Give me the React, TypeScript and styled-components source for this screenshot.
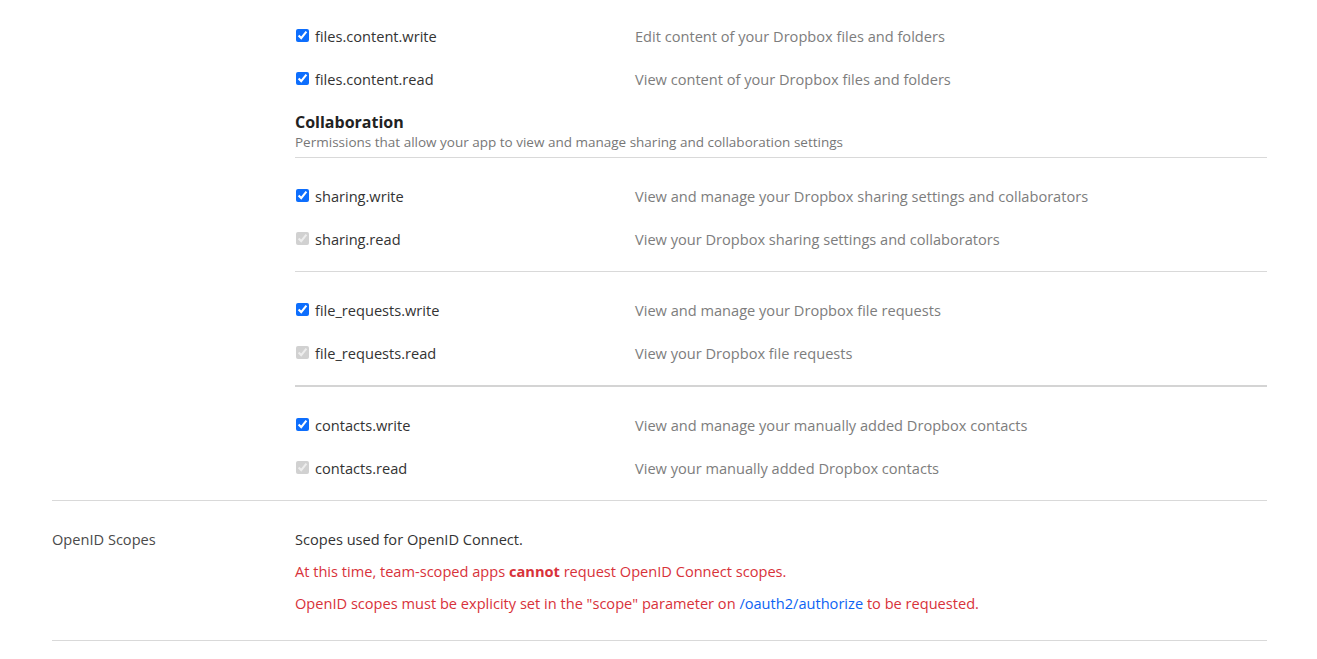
import React from "react";
import styled, { createGlobalStyle } from "styled-components";

const Global = createGlobalStyle`
  html, body { margin: 0; padding: 0; background: #fff; }
  body { font-family: "Open Sans", "Noto Sans", sans-serif; color: #333; }
`;

const Page = styled.div`
  padding: 14px 50px 0 52px;
`;

const Section = styled.section<{ $padded?: boolean; $border?: boolean }>`
  display: grid;
  grid-template-columns: 243px 1fr;
  padding: ${(p) => (p.$padded ? "27px 0 26px" : "0")};
  border-top: ${(p) => (p.$border ? "1px solid #d9d9d9" : "none")};
  border-bottom: ${(p) => (p.$border ? "1px solid #d9d9d9" : "none")};
`;

const SectionLabel = styled.div`
  font-size: 14.6px;
  line-height: 22px;
  color: #4a4a4a;
`;

const Content = styled.div`
  display: flex;
  flex-direction: column;
`;

const Group = styled.div<{ $thick?: boolean; $first?: boolean }>`
  padding: ${(p) => (p.$first ? "0 0 10px" : "16px 0 11px")};
  border-top: ${(p) =>
    p.$first ? "none" : p.$thick ? "2px solid #d4d4d4" : "1px solid #d9d9d9"};
`;

const Row = styled.div`
  display: grid;
  grid-template-columns: 340px 1fr;
  align-items: center;
  height: 43px;
`;

const ScopeLabel = styled.label`
  display: flex;
  align-items: center;
  font-size: 14.6px;
  color: #333;
`;

const Check = styled.input`
  width: 13px;
  height: 13px;
  margin: 0 6px 0 1px;
  accent-color: #0d6efd;
`;

const Desc = styled.div`
  font-size: 14.6px;
  color: #7d7d7d;
`;

const Category = styled.div`
  margin-top: 2px;
  padding-bottom: 5px;
`;

const CategoryTitle = styled.div`
  font-size: 16px;
  line-height: 20px;
  font-weight: 700;
  color: #222;
`;

const CategorySub = styled.div`
  font-size: 13.5px;
  line-height: 20px;
  color: #777;
`;

const Para = styled.p<{ $warn?: boolean }>`
  margin: 0 0 10px;
  font-size: 14.6px;
  line-height: 22px;
  color: ${(p) => (p.$warn ? "#d8323a" : "#333")};
  &:last-child { margin-bottom: 0; }
`;

const Link = styled.a`
  color: #0d63f3;
  text-decoration: none;
`;

type Scope = { name: string; desc: string; disabled?: boolean };

const ScopeRow = ({ s }: { s: Scope }) => (
  <Row>
    <ScopeLabel>
      <Check type="checkbox" defaultChecked disabled={s.disabled} />
      {s.name}
    </ScopeLabel>
    <Desc>{s.desc}</Desc>
  </Row>
);

const files: Scope[] = [
  { name: "files.content.write", desc: "Edit content of your Dropbox files and folders" },
  { name: "files.content.read", desc: "View content of your Dropbox files and folders" },
];

const groups: { thick?: boolean; scopes: Scope[] }[] = [
  {
    scopes: [
      { name: "sharing.write", desc: "View and manage your Dropbox sharing settings and collaborators" },
      { name: "sharing.read", desc: "View your Dropbox sharing settings and collaborators", disabled: true },
    ],
  },
  {
    scopes: [
      { name: "file_requests.write", desc: "View and manage your Dropbox file requests" },
      { name: "file_requests.read", desc: "View your Dropbox file requests", disabled: true },
    ],
  },
  {
    thick: true,
    scopes: [
      { name: "contacts.write", desc: "View and manage your manually added Dropbox contacts" },
      { name: "contacts.read", desc: "View your manually added Dropbox contacts", disabled: true },
    ],
  },
];

export default function App() {
  return (
    <>
      <Global />
      <Page>
        <Section>
          <div />
          <Content>
            <Group $first>
              {files.map((s) => (
                <ScopeRow key={s.name} s={s} />
              ))}
            </Group>
            <Category>
              <CategoryTitle>Collaboration</CategoryTitle>
              <CategorySub>
                Permissions that allow your app to view and manage sharing and collaboration settings
              </CategorySub>
            </Category>
            {groups.map((g, i) => (
              <Group key={i} $thick={g.thick}>
                {g.scopes.map((s) => (
                  <ScopeRow key={s.name} s={s} />
                ))}
              </Group>
            ))}
          </Content>
        </Section>
        <Section $padded $border>
          <SectionLabel>OpenID Scopes</SectionLabel>
          <Content>
            <Para>Scopes used for OpenID Connect.</Para>
            <Para $warn>
              At this time, team-scoped apps <b>cannot</b> request OpenID Connect scopes.
            </Para>
            <Para $warn>
              OpenID scopes must be explicity set in the "scope" parameter on{" "}
              <Link href="#">/oauth2/authorize</Link> to be requested.
            </Para>
          </Content>
        </Section>
      </Page>
    </>
  );
}
